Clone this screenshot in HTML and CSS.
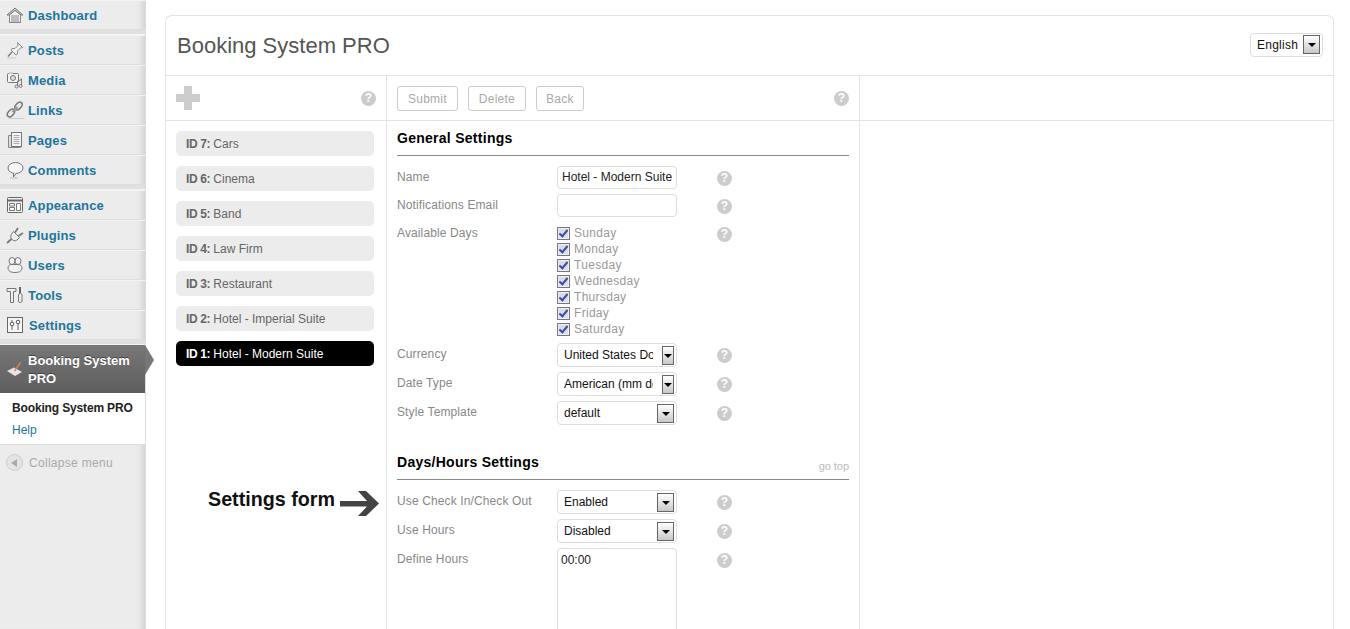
FILE: index.html
```html
<!DOCTYPE html>
<html lang="en">
<head>
    <meta charset="UTF-8">
    <meta name="viewport" content="width=device-width, initial-scale=1.0">
    <title>Booking System PRO</title>
    <link rel="stylesheet" href="styles.css">
</head>
<body>
    <aside class="menu">
        <a class="menu-item" href="#">
            <svg class="menu-icon" viewBox="0 0 18 18"><path d="M1 9l8-7 8 7-2 0-6-5-6 5z" fill="#ddd" stroke="#777"/><path d="M3.500 9v7.500h11V9L9 4.500z" fill="#f2f2f2" stroke="#888"/><path d="M6 9v7M8 9v7M10 9v7M12 9v7M3 16.500h12" stroke="#888"/></svg>
            Dashboard
        </a>
        <div class="menu-sep"></div>
        <a class="menu-item" href="#">
            <svg class="menu-icon" viewBox="0 0 18 18"><path d="M11.500 1.500l5 5-2 .5-3 3 0 3-1.500 1-5-5 1-1.500 3 0 3-3z" fill="#f2f2f2" stroke="#888"/><path d="M6 11l-4 4.500" stroke="#777" stroke-width="1.300"/><path d="M1 17h9" stroke="#ccc"/></svg>
            Posts
        </a>
        <a class="menu-item" href="#">
            <svg class="menu-icon" viewBox="0 0 18 18"><rect x="1.500" y="2.500" width="11" height="9" rx="1" fill="#f2f2f2" stroke="#777"/><rect x="3" y="1" width="4" height="2" fill="#ccc"/><circle cx="7" cy="7" r="2.500" fill="#ddd" stroke="#777"/><path d="M15.500 7.500v7M11.500 10v5.500M11.500 10l4-1.500" stroke="#777" fill="none"/><circle cx="10.500" cy="15.500" r="1.500" fill="#eee" stroke="#777"/><circle cx="14.500" cy="15" r="1.500" fill="#eee" stroke="#777"/></svg>
            Media
        </a>
        <a class="menu-item" href="#">
            <svg class="menu-icon" viewBox="0 0 18 18"><ellipse cx="12.500" cy="5" rx="2.800" ry="4.500" transform="rotate(40 12.500 5)" fill="none" stroke="#777" stroke-width="1.500"/><ellipse cx="5" cy="12" rx="2.800" ry="4.500" transform="rotate(40 5 12)" fill="none" stroke="#777" stroke-width="1.500"/><path d="M6.500 11l5-5" stroke="#999" stroke-width="2"/><path d="M3 17.500h15" stroke="#ccc"/></svg>
            Links
        </a>
        <a class="menu-item" href="#">
            <svg class="menu-icon" viewBox="0 0 18 18"><path d="M2.500 4.500h3v11h9v1h-12z" fill="#ddd" stroke="#888"/><rect x="5.500" y="1.500" width="10" height="14" fill="#f5f5f5" stroke="#777"/><path d="M7.500 4.500h6M7.500 6.500h6M7.500 8.500h6M7.500 10.500h6M7.500 12.500h6" stroke="#aaa"/></svg>
            Pages
        </a>
        <a class="menu-item" href="#">
            <svg class="menu-icon" viewBox="0 0 18 18"><ellipse cx="9.500" cy="7" rx="7.500" ry="5.500" fill="#f5f5f5" stroke="#777"/><path d="M7.500 12v4l2.500-3.500" fill="#f5f5f5" stroke="#777"/><path d="M4 17h8" stroke="#bbb"/></svg>
            Comments
        </a>
        <div class="menu-sep"></div>
        <a class="menu-item" href="#">
            <svg class="menu-icon" viewBox="0 0 18 18"><rect x="1.500" y="1.500" width="15" height="15" rx="1" fill="#f5f5f5" stroke="#666"/><path d="M2 4.500h14" stroke="#666" stroke-width="2"/><path d="M3.500 7.500h5v2.500h-5zM3.500 11.500h5v3h-5zM10.500 7.500h4v7h-4z" fill="#fff" stroke="#777"/></svg>
            Appearance
        </a>
        <a class="menu-item" href="#">
            <svg class="menu-icon" viewBox="0 0 18 18"><path d="M7.500 5.500l6 6-2.500 2.500c-2 1.500-4.500.5-5.500-1s-1-3.500 0-5z" fill="#eee" stroke="#777"/><path d="M9 6.500l3-4.500M12.500 10l4.500-3M5.500 13l-4.500 4" stroke="#777" stroke-width="1.700" fill="none"/></svg>
            Plugins
        </a>
        <a class="menu-item" href="#">
            <svg class="menu-icon" viewBox="0 0 18 18"><ellipse cx="6" cy="5" rx="3" ry="3.500" fill="#f2f2f2" stroke="#777"/><ellipse cx="12" cy="5" rx="3" ry="3.500" fill="#f2f2f2" stroke="#777"/><path d="M2 12c0-2.500 2-3.500 3-3.500h7c2 0 4 1 4 3.500s-2 4.500-7 4.500-7-2-7-4.500z" fill="#f2f2f2" stroke="#777"/></svg>
            Users
        </a>
        <a class="menu-item" href="#">
            <svg class="menu-icon" viewBox="0 0 18 18"><path d="M1 2.500h9v3H7.500v11h-3v-11H1z" fill="#eee" stroke="#777"/><path d="M14 1v6" stroke="#666" stroke-width="2"/><rect x="12.500" y="7.500" width="3.500" height="9" rx="1.500" fill="#eee" stroke="#777"/></svg>
            Tools
        </a>
        <a class="menu-item" href="#">
            <svg class="menu-icon" viewBox="0 0 18 18"><rect x="1.500" y="1.500" width="15" height="15" fill="#f5f5f5" stroke="#666"/><path d="M6 4v10M12 4v10" stroke="#666"/><circle cx="6" cy="8" r="1.800" fill="#fff" stroke="#555"/><circle cx="12" cy="6" r="1.800" fill="#fff" stroke="#555"/></svg>
            <span class="settings-label">Settings</span>
        </a>
        <div class="menu-sep"></div>
        <a class="menu-item menu-current" href="#">
            <svg class="menu-icon" viewBox="0 0 18 18"><path d="M1 10l7-3.500 8 4.500-7 4z" fill="#e6e6e6"/><path d="M8.500 10l6-8.500" stroke="#d9825b" stroke-width="1.500"/></svg>
            <span>Booking System PRO</span>
        </a>
        <div class="submenu">
            <a class="submenu-active" href="#">Booking System PRO</a>
            <a href="#">Help</a>
        </div>
        <div class="collapse">
            <span class="collapse-btn"></span>
            Collapse menu
        </div>
    </aside>

    <main class="content">
        <section class="card">
            <header class="card-head">
                <h1>Booking System PRO</h1>
                <div class="select lang-select">
                    <span class="select-value">English</span>
                    <span class="select-btn"></span>
                </div>
            </header>

            <div class="columns">
                <div class="col-list">
                    <div class="toolbar toolbar-list">
                        <span class="plus"></span>
                        <span class="help">?</span>
                    </div>
                    <ul class="calendars">
                        <li><b>ID 7:</b> Cars</li>
                        <li><b>ID 6:</b> Cinema</li>
                        <li><b>ID 5:</b> Band</li>
                        <li><b>ID 4:</b> Law Firm</li>
                        <li><b>ID 3:</b> Restaurant</li>
                        <li><b>ID 2:</b> Hotel - Imperial Suite</li>
                        <li class="selected"><b>ID 1:</b> Hotel - Modern Suite</li>
                    </ul>
                    <div class="note">
                        <span>Settings form</span>
                        <svg width="40" height="25" viewBox="0 0 40 25"><path d="M0 10h27L18 0h8l13 12.500L26 25h-8l9-9.500H0z" fill="#444"/></svg>
                    </div>
                </div>

                <div class="col-form">
                    <div class="toolbar toolbar-form">
                        <button type="button">Submit</button>
                        <button type="button">Delete</button>
                        <button type="button">Back</button>
                        <span class="help">?</span>
                    </div>

                    <form class="settings">
                        <h3>General Settings</h3>
                        <div class="row">
                            <label>Name</label>
                            <div class="field field-text">Hotel - Modern Suite</div>
                            <span class="help">?</span>
                        </div>
                        <div class="row">
                            <label>Notifications Email</label>
                            <div class="field field-text"></div>
                            <span class="help">?</span>
                        </div>
                        <div class="row row-days">
                            <label>Available Days</label>
                            <div class="days">
                                <div class="day"><span class="check"></span>Sunday</div>
                                <div class="day"><span class="check"></span>Monday</div>
                                <div class="day"><span class="check"></span>Tuesday</div>
                                <div class="day"><span class="check"></span>Wednesday</div>
                                <div class="day"><span class="check"></span>Thursday</div>
                                <div class="day"><span class="check"></span>Friday</div>
                                <div class="day"><span class="check"></span>Saturday</div>
                            </div>
                            <span class="help">?</span>
                        </div>
                        <div class="row row-select">
                            <label>Currency</label>
                            <div class="select select-long"><span class="select-value">United States Dollar</span><span class="select-btn"></span></div>
                            <span class="help">?</span>
                        </div>
                        <div class="row row-select">
                            <label>Date Type</label>
                            <div class="select select-long"><span class="select-value">American (mm dd yyyy)</span><span class="select-btn"></span></div>
                            <span class="help">?</span>
                        </div>
                        <div class="row row-select">
                            <label>Style Template</label>
                            <div class="select"><span class="select-value">default</span><span class="select-btn"></span></div>
                            <span class="help">?</span>
                        </div>

                        <h3 class="second">Days/Hours Settings <a href="#">go top</a></h3>
                        <div class="row row-select">
                            <label>Use Check In/Check Out</label>
                            <div class="select"><span class="select-value">Enabled</span><span class="select-btn"></span></div>
                            <span class="help">?</span>
                        </div>
                        <div class="row row-select">
                            <label>Use Hours</label>
                            <div class="select"><span class="select-value">Disabled</span><span class="select-btn"></span></div>
                            <span class="help">?</span>
                        </div>
                        <div class="row">
                            <label>Define Hours</label>
                            <div class="field field-area">00:00</div>
                            <span class="help">?</span>
                        </div>
                    </form>
                </div>

                <div class="col-extra"></div>
            </div>
        </section>
    </main>
</body>
</html>
```

FILE: styles.css
```css
html, body{
    margin: 0;
    height: 100%;
    overflow: hidden;
}
body{
    display: flex;
    background-color: #fff;
    font: 12px "Liberation Sans", Arial, sans-serif;
    color: #555;
}
a{
    text-decoration: none;
}

/* left admin menu */
.menu{
    width: 145px;
    flex: none;
    background-color: #ececec;
    box-shadow: inset -8px 0 6px -6px #ccc, 1px 0 0 #ddd;
}
.menu-item{
    display: flex;
    align-items: center;
    gap: 4px;
    height: 28px;
    padding: 1px 0 0 6px;
    border-bottom: 1px solid #ddd;
    box-shadow: inset 0 1px 0 #f4f4f4;
    color: #21759b;
    font-size: 13px;
    font-weight: bold;
    letter-spacing: .15px;
}
.menu-icon{
    width: 18px;
    height: 18px;
    flex: none;
}
.settings-label{
    margin-left: 1px;
}
.menu-sep{
    height: 5px;
    box-sizing: border-box;
    background-color: #e0e0e0;
    border-bottom: 1px solid #f4f4f4;
}
.menu-current{
    position: relative;
    height: 47px;
    border: 0;
    box-shadow: none;
    background: linear-gradient(#777, #5e5e5e);
    color: #fff;
    line-height: 18px;
    padding-right: 12px;
    letter-spacing: 0;
    text-shadow: 0 -1px 0 #444;
}
.menu-current::after{
    content: "";
    position: absolute;
    left: 145px;
    top: 0;
    border-left: 9px solid #777;
    border-top: 15px solid transparent;
    border-bottom: 15px solid transparent;
}
.submenu{
    height: 52px;
    box-sizing: border-box;
    padding: 4px 0 0 12px;
    background-color: #fff;
    border-bottom: 1px solid #ddd;
}
.submenu a{
    display: block;
    height: 22px;
    line-height: 22px;
    color: #21759b;
    white-space: nowrap;
}
.submenu .submenu-active{
    color: #222;
    font-weight: bold;
    letter-spacing: -.15px;
}
.collapse{
    display: flex;
    align-items: center;
    gap: 6px;
    height: 35px;
    padding-left: 6px;
    color: #aaa;
    letter-spacing: .3px;
}
.collapse-btn{
    width: 17px;
    height: 17px;
    box-sizing: border-box;
    border: 1px solid #ccc;
    border-radius: 50%;
    background-color: #e4e4e4;
    display: flex;
    align-items: center;
    justify-content: center;
}
.collapse-btn::before{
    content: "";
    border-right: 6px solid #aaa;
    border-top: 4px solid transparent;
    border-bottom: 4px solid transparent;
    margin-right: 2px;
}

/* main card */
.content{
    flex: 1;
    box-sizing: border-box;
    height: 100%;
    padding: 15px 16px 0 20px;
    min-width: 0;
}
.card{
    box-sizing: border-box;
    height: 100%;
    overflow: hidden;
    border: 1px solid #e3e3e3;
    border-bottom: 0;
    border-radius: 7px 7px 0 0;
    display: flex;
    flex-direction: column;
}
.card-head{
    height: 59px;
    flex: none;
    display: flex;
    align-items: center;
    justify-content: space-between;
    padding: 0 10px 0 11px;
    border-bottom: 1px solid #e3e3e3;
}
h1{
    margin: 0;
    font-size: 22px;
    font-weight: normal;
    color: #555;
}
.columns{
    flex: 1;
    display: flex;
    min-height: 0;
}
.col-list{
    position: relative;
    width: 220px;
    flex: none;
    border-right: 1px solid #e3e3e3;
}
.col-form{
    width: 472px;
    flex: none;
    border-right: 1px solid #e3e3e3;
}
.col-extra{
    flex: 1;
}
.col-extra::before{
    content: "";
    display: block;
    height: 44px;
    border-bottom: 1px solid #e3e3e3;
}

.toolbar{
    height: 44px;
    display: flex;
    align-items: center;
    border-bottom: 1px solid #e3e3e3;
}
.toolbar-list{
    justify-content: space-between;
    padding: 0 10px;
}
.toolbar-form{
    padding: 0 10px;
    gap: 10px;
}
.toolbar-form .help{
    margin-left: auto;
}
.toolbar button{
    height: 25px;
    padding: 1px 10px 0;
    background-color: #fff;
    border: 1px solid #ccc;
    border-radius: 3px;
    color: #aaa;
    font: 12px "Liberation Sans", Arial, sans-serif;
    letter-spacing: .25px;
}
.toolbar button:nth-of-type(3){
    padding: 1px 9px 0;
}
.plus{
    width: 24px;
    height: 24px;
    background:
        linear-gradient(#ccc, #ccc) center / 24px 8px no-repeat,
        linear-gradient(#ccc, #ccc) center / 8px 24px no-repeat;
}
.help{
    width: 15px;
    height: 15px;
    flex: none;
    border-radius: 50%;
    background-color: #ccc;
    color: #fff;
    font-size: 12px;
    font-weight: bold;
    line-height: 15px;
    text-align: center;
}

/* calendar list */
.calendars{
    list-style: none;
    margin: 0;
    padding: 10px 12px 0 10px;
}
.calendars li{
    height: 25px;
    line-height: 26px;
    margin-bottom: 10px;
    padding-left: 10px;
    border-radius: 5px;
    background-color: #ececec;
    color: #666;
}
.calendars b{
    letter-spacing: -.4px;
}
.calendars .selected{
    background-color: #000;
    color: #fff;
}
.note{
    position: absolute;
    left: 42px;
    top: 411px;
    display: flex;
    align-items: flex-start;
    gap: 5px;
    color: #111;
    font-size: 19.700px;
    font-weight: bold;
    line-height: 24px;
    white-space: nowrap;
}
.note svg{
    margin-top: 4px;
}

/* settings form */
.settings{
    padding: 0 10px;
}
h3{
    margin: 0;
    height: 34px;
    line-height: 34px;
    border-bottom: 1px solid #888;
    color: #000;
    font-size: 14px;
    letter-spacing: .27px;
    position: relative;
}
h3.second{
    margin-top: 15px;
}
h3 a{
    position: absolute;
    right: 0;
    bottom: -4px;
    font-size: 11px;
    font-weight: normal;
    letter-spacing: -.05px;
    color: #bbb;
}
.row{
    display: flex;
    align-items: flex-start;
    min-height: 28px;
}
h3 + .row{
    margin-top: 10px;
}
.row label{
    width: 160px;
    flex: none;
    color: #888;
    line-height: 22px;
    letter-spacing: .12px;
}
.row .help{
    margin: 5px 0 0 40px;
}
.row-select{
    min-height: 29px;
}
.row-days{
    margin-bottom: 6px;
}
.field{
    width: 120px;
    box-sizing: border-box;
    background-color: #fff;
    border: 1px solid #ddd;
    border-radius: 4px;
    color: #222;
}
.field-text{
    height: 23px;
    line-height: 21px;
    padding: 0 4px;
    overflow: hidden;
    white-space: nowrap;
}
.field-area{
    height: 120px;
    padding: 4px 3px;
}
.select{
    width: 120px;
    height: 24px;
    box-sizing: border-box;
    display: flex;
    align-items: center;
    padding: 0 2px 0 6px;
    border: 1px solid #ddd;
    border-radius: 4px;
    color: #111;
    background-color: #fff;
}
.select-value{
    flex: 1;
    min-width: 0;
    overflow: hidden;
    white-space: nowrap;
}
.select-btn{
    position: relative;
    width: 17px;
    height: 19px;
    flex: none;
    box-sizing: border-box;
    border: 1px solid #666;
    background: linear-gradient(#fff, #c8c8c8);
}
.select-btn::after{
    content: "";
    position: absolute;
    left: 4px;
    top: 7px;
    border-top: 4px solid #000;
    border-left: 4px solid transparent;
    border-right: 4px solid transparent;
}
.select-long .select-value{
    margin-right: 9px;
}
.select-long .select-btn{
    width: 12px;
}
.select-long .select-btn::after{
    left: 1px;
}
.lang-select{
    width: 73px;
    margin-bottom: 2px;
    letter-spacing: .25px;
}
.days{
    width: 120px;
    flex: none;
    padding-top: 3px;
}
.day{
    display: flex;
    align-items: center;
    height: 16px;
    color: #999;
    letter-spacing: .3px;
}
.check{
    position: relative;
    width: 13px;
    height: 13px;
    box-sizing: border-box;
    margin-right: 4px;
    border: 1px solid #777;
    background-color: #d8dcea;
    box-shadow: inset 0 0 0 1px #f0f0f4;
}
.check::after{
    content: "";
    position: absolute;
    left: 3px;
    top: 0;
    width: 3px;
    height: 7px;
    border: solid #3b4a9e;
    border-width: 0 2px 2px 0;
    transform: rotate(40deg);
}
```
